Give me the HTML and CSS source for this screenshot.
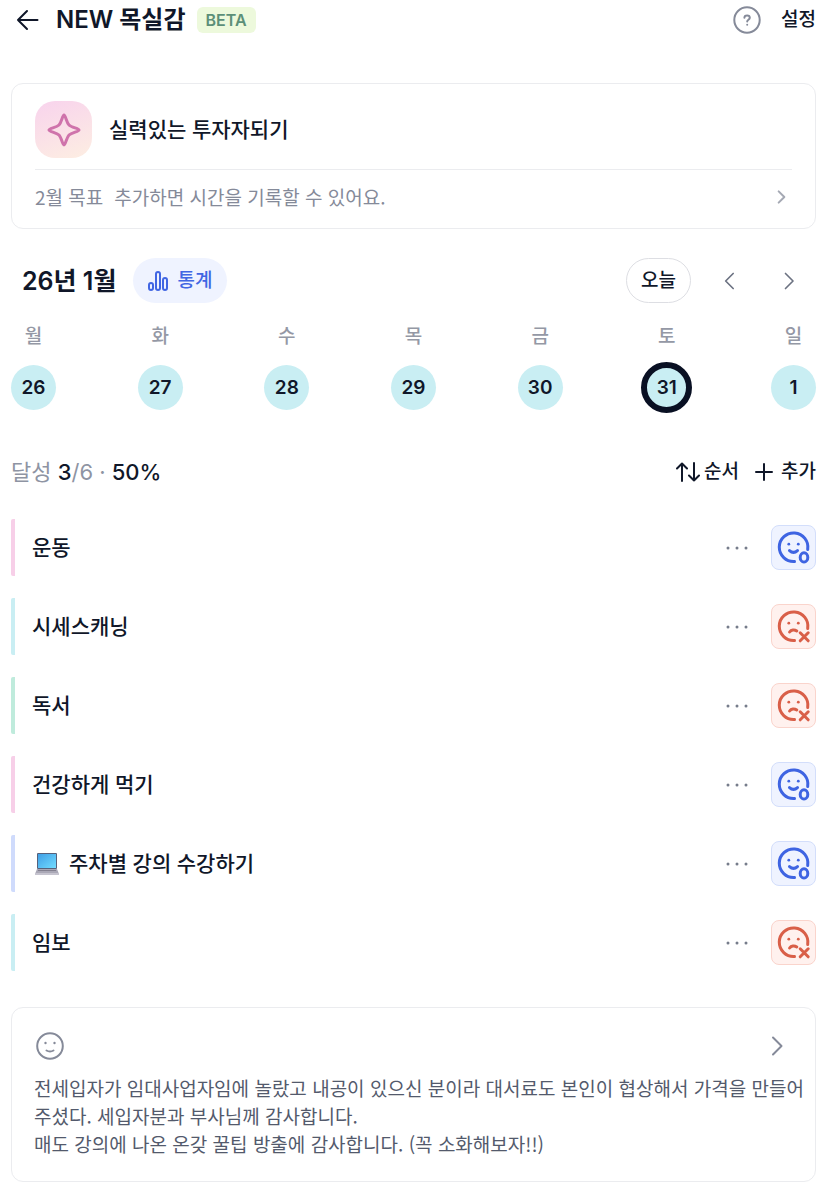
FILE: index.html
```html
<!DOCTYPE html>
<html lang="ko">
<head>
    <meta charset="UTF-8">
    <meta name="viewport" content="width=device-width, initial-scale=1.0">
    <title>NEW 목실감</title>
    <link rel="stylesheet" href="styles.css">
</head>
<body>
    <!-- Shared icons -->
    <svg class="icon-defs" aria-hidden="true">
        <symbol id="icon-right" viewBox="0 0 24 24">
            <path d="M7 3.500l8.500 8.500-8.500 8.500"/>
        </symbol>
        <symbol id="icon-more" viewBox="0 0 24 24">
            <circle cx="3" cy="12" r="1.5"/>
            <circle cx="12" cy="12" r="1.5"/>
            <circle cx="21" cy="12" r="1.5"/>
        </symbol>
        <symbol id="icon-done" viewBox="1 1 43 43">
            <path d="M36.7 24.5A14.3 14.3 0 1 0 23.5 36.5"/>
            <path d="M18.5 25.6q4 3.600 8 0"/>
            <ellipse cx="33" cy="32.400" rx="3.8" ry="4.6"/>
            <circle class="eye" cx="17.8" cy="19.2" r="1.4"/>
            <circle class="eye" cx="27.3" cy="19.2" r="1.4"/>
        </symbol>
        <symbol id="icon-fail" viewBox="1 1 43 43">
            <path d="M36.7 24.5A14.3 14.3 0 1 0 23.5 36.5"/>
            <path d="M18.6 28c1.6-2.400 4.800-2.700 7.200-1"/>
            <path d="M29.2 28.800l8 8M37.2 28.800l-8 8"/>
            <circle class="eye" cx="17.8" cy="19.2" r="1.4"/>
            <circle class="eye" cx="27.3" cy="19.2" r="1.4"/>
        </symbol>
    </svg>

    <header class="header">
        <button type="button" class="icon-button" aria-label="뒤로">
            <svg width="24" height="24" viewBox="0 0 24 24"><path d="M22.5 12H3M12 3l-9 9 9 9"/></svg>
        </button>
        <h1>NEW 목실감</h1>
        <span class="badge">BETA</span>
        <button type="button" class="icon-button help" aria-label="도움말">
            <svg width="28" height="28" viewBox="0 0 28 28">
                <circle cx="14" cy="14" r="12.7"/>
                <path d="M11.4 11.8c0-3.200 5.400-3.200 5.400 0 0 1.800-2.600 2-2.600 3.600"/>
                <circle class="dot" cx="14.2" cy="18.800" r="1"/>
            </svg>
        </button>
        <a href="#" class="settings">설정</a>
    </header>

    <main>
        <section class="card goal">
            <div class="goal-main">
                <span class="goal-icon">
                    <svg width="36" height="36" viewBox="0 0 36 36"><path d="M18 3C19.500 3 20.500 10.500 23 13C25.500 15.500 33 16.500 33 18C33 19.500 25.500 20.500 23 23C20.500 25.500 19.500 33 18 33C16.500 33 15.500 25.500 13 23C10.500 20.500 3 19.500 3 18C3 16.500 10.500 15.500 13 13C15.500 10.500 16.500 3 18 3Z"/></svg>
                </span>
                <h2>실력있는 투자자되기</h2>
            </div>
            <a href="#" class="goal-month">
                <span>2월 목표</span>
                <span>추가하면 시간을 기록할 수 있어요.</span>
                <svg class="chevron" width="16" height="16"><use href="#icon-right"/></svg>
            </a>
        </section>

        <section class="calendar">
            <div class="calendar-header">
                <h2>26년 1월</h2>
                <button type="button" class="stats">
                    <svg width="20" height="20" viewBox="0 0 20 20">
                        <rect x="1" y="12" width="4" height="7" rx="2"/>
                        <rect x="8" y="1" width="4" height="18" rx="2"/>
                        <rect x="15" y="7" width="4" height="12" rx="2"/>
                    </svg>
                    통계
                </button>
                <button type="button" class="today">오늘</button>
                <button type="button" class="icon-button move" aria-label="이전 주">
                    <svg width="20" height="20" viewBox="0 0 24 24"><path d="M17 3l-9 9 9 9"/></svg>
                </button>
                <button type="button" class="icon-button move" aria-label="다음 주">
                    <svg width="20" height="20" viewBox="0 0 24 24"><path d="M9 3l9 9-9 9"/></svg>
                </button>
            </div>
            <div class="week">
                <div class="day"><span>월</span><button type="button">26</button></div>
                <div class="day"><span>화</span><button type="button">27</button></div>
                <div class="day"><span>수</span><button type="button">28</button></div>
                <div class="day"><span>목</span><button type="button">29</button></div>
                <div class="day"><span>금</span><button type="button">30</button></div>
                <div class="day"><span>토</span><button type="button" class="selected">31</button></div>
                <div class="day"><span>일</span><button type="button">1</button></div>
            </div>
        </section>

        <section class="summary">
            <p>달성 <strong>3</strong>/6 · <strong>50%</strong></p>
            <div class="summary-actions">
                <button type="button" class="sort">
                    <svg width="24" height="20" viewBox="0 0 24 20"><path d="M6 19V1.500M1 6.500l5-5 5 5M18 1v17.500M13 13.500l5 5 5-5"/></svg>
                    순서
                </button>
                <button type="button" class="add">
                    <svg width="18" height="18" viewBox="0 0 18 18"><path d="M9 1v16M1 9h16"/></svg>
                    추가
                </button>
            </div>
        </section>

        <ul class="todo-list">
            <li class="todo pink">
                <span class="todo-name">운동</span>
                <button type="button" class="icon-button more" aria-label="더보기"><svg width="24" height="24"><use href="#icon-more"/></svg></button>
                <button type="button" class="status done" aria-label="완료"><svg><use href="#icon-done"/></svg></button>
            </li>
            <li class="todo cyan">
                <span class="todo-name">시세스캐닝</span>
                <button type="button" class="icon-button more" aria-label="더보기"><svg width="24" height="24"><use href="#icon-more"/></svg></button>
                <button type="button" class="status fail" aria-label="미완료"><svg><use href="#icon-fail"/></svg></button>
            </li>
            <li class="todo green">
                <span class="todo-name">독서</span>
                <button type="button" class="icon-button more" aria-label="더보기"><svg width="24" height="24"><use href="#icon-more"/></svg></button>
                <button type="button" class="status fail" aria-label="미완료"><svg><use href="#icon-fail"/></svg></button>
            </li>
            <li class="todo pink">
                <span class="todo-name">건강하게 먹기</span>
                <button type="button" class="icon-button more" aria-label="더보기"><svg width="24" height="24"><use href="#icon-more"/></svg></button>
                <button type="button" class="status done" aria-label="완료"><svg><use href="#icon-done"/></svg></button>
            </li>
            <li class="todo blue">
                <span class="todo-name">
                    <svg class="laptop" width="30" height="24" viewBox="0 0 30 24">
                        <defs>
                            <linearGradient id="screen" x1="0" y1="0" x2="1" y2="1">
                                <stop offset="0" stop-color="#3f9fe6"/>
                                <stop offset="1" stop-color="#72dcff"/>
                            </linearGradient>
                        </defs>
                        <rect x="5" y="1" width="20" height="16" rx="1" fill="#56617b"/>
                        <rect x="6" y="2" width="18" height="14" fill="url(#screen)"/>
                        <path d="M5 17h20l2 5H3z" fill="#aaa8b6"/>
                        <path d="M6 18h18v1H6z" fill="#83808f"/>
                        <path d="M3 21h24v2H3z" fill="#c6c4cf"/>
                    </svg>
                    주차별 강의 수강하기
                </span>
                <button type="button" class="icon-button more" aria-label="더보기"><svg width="24" height="24"><use href="#icon-more"/></svg></button>
                <button type="button" class="status done" aria-label="완료"><svg><use href="#icon-done"/></svg></button>
            </li>
            <li class="todo cyan">
                <span class="todo-name">임보</span>
                <button type="button" class="icon-button more" aria-label="더보기"><svg width="24" height="24"><use href="#icon-more"/></svg></button>
                <button type="button" class="status fail" aria-label="미완료"><svg><use href="#icon-fail"/></svg></button>
            </li>
        </ul>

        <section class="card memo">
            <div class="memo-header">
                <svg width="28" height="28" viewBox="0 0 28 28">
                    <circle cx="14" cy="14" r="12.8"/>
                    <path d="M10.500 18.500q3.500 2 7 0"/>
                    <circle class="dot" cx="9.500" cy="11" r="1.200"/>
                    <circle class="dot" cx="18.500" cy="11" r="1.200"/>
                </svg>
                <button type="button" class="icon-button" aria-label="감사일기 보기">
                    <svg width="24" height="24"><use href="#icon-right"/></svg>
                </button>
            </div>
            <p>전세입자가 임대사업자임에 놀랐고 내공이 있으신 분이라 대서료도 본인이 협상해서 가격을 만들어 주셨다. 세입자분과 부사님께 감사합니다.<br>매도 강의에 나온 온갖 꿀팁 방출에 감사합니다. (꼭 소화해보자!!)</p>
        </section>
    </main>
</body>
</html>
```
FILE: styles.css
```css
* {
    box-sizing: border-box;
}

body {
    font-family: Inter, "Noto Sans CJK KR", sans-serif;
    font-size: 19px;
    line-height: 28px;
    margin: 0;
    padding: 0 11px 10px;
    background-color: white;
    color: #101729;
}

h1, h2, p, ul {
    margin: 0;
    padding: 0;
}

button {
    font: inherit;
    color: inherit;
    background: none;
    border: none;
    padding: 0;
    cursor: pointer;
}

a {
    color: inherit;
    text-decoration: none;
}

svg {
    display: block;
    flex-shrink: 0;
    fill: none;
    stroke: currentColor;
    stroke-width: 2;
    stroke-linecap: round;
    stroke-linejoin: round;
}

.icon-defs {
    position: absolute;
    width: 0;
    height: 0;
}

.dot,
.eye {
    fill: currentColor;
    stroke: none;
}

.icon-button {
    display: flex;
    align-items: center;
    justify-content: center;
}

.card {
    border: 1px solid #ebecef;
    border-radius: 12px;
}

/* Header */
.header {
    display: flex;
    align-items: center;
    height: 40px;
    padding-left: 4px;
}

.header h1 {
    margin: 0 11px 0 17px;
    font-size: 24px;
    font-weight: 600;
}

.badge {
    padding: 0 9px;
    border-radius: 6px;
    background-color: #edf9dc;
    color: #5c8f78;
    font-size: 16px;
    font-weight: 600;
    line-height: 26px;
}

.help {
    margin-left: auto;
    color: #858a99;
}

.settings {
    margin-left: 20px;
    font-weight: 500;
}

/* Goal */
.goal {
    margin-top: 43px;
    padding: 17px 23px 0;
}

.goal-main {
    display: flex;
    align-items: center;
    gap: 17px;
    padding-bottom: 11px;
    border-bottom: 1px solid #ebecef;
}

.goal-icon {
    display: flex;
    align-items: center;
    justify-content: center;
    width: 57px;
    height: 57px;
    border-radius: 20px;
    background: linear-gradient(160deg, #f8d3ed, #fdeee2);
    color: #cf73ab;
}

.goal-icon svg {
    stroke-width: 3;
}

.goal h2 {
    font-size: 21px;
    font-weight: 500;
}

.goal-month {
    display: flex;
    align-items: center;
    gap: 11px;
    height: 58px;
    padding-bottom: 4px;
    color: #858a99;
    font-family: "Noto Sans CJK KR", sans-serif;
}

.chevron {
    margin-left: auto;
    margin-right: 2px;
    color: #a5a9b4;
    stroke-width: 3;
}

/* Calendar */
.calendar {
    margin-top: 29px;
}

.calendar-header {
    display: flex;
    align-items: center;
    padding-left: 11px;
}

.calendar-header h2 {
    font-size: 25px;
    font-weight: 600;
}

.stats,
.today {
    display: flex;
    align-items: center;
    height: 45px;
    padding: 0 15px;
    border-radius: 23px;
    font-weight: 500;
}

.stats {
    gap: 9px;
    margin-left: 17px;
    background-color: #eff3ff;
    color: #4166e3;
}

.today {
    margin-left: auto;
    margin-right: 10px;
    padding: 0 14px;
    border: 1px solid #dddee3;
}

.move {
    width: 56px;
    height: 45px;
    color: #6c7282;
}

.move + .move {
    margin-left: 3px;
}

.week {
    display: flex;
    justify-content: space-between;
    margin-top: 20px;
}

.day {
    display: flex;
    flex-direction: column;
    align-items: center;
    gap: 14px;
    width: 45px;
    color: #9498a5;
    font-weight: 500;
}

.day button {
    flex-shrink: 0;
    width: 45px;
    height: 45px;
    border-radius: 50%;
    background-color: #c9eef3;
    color: #101729;
    font-weight: 600;
}

.day .selected {
    width: 51px;
    height: 51px;
    margin: -3px;
    border: 6px solid #091023;
}

/* Summary */
.summary {
    display: flex;
    align-items: center;
    justify-content: space-between;
    margin-top: 48px;
    color: #8e94a3;
}

.summary p {
    font-size: 22px;
}

.summary strong {
    color: #101729;
    font-weight: 500;
}

.summary-actions {
    display: flex;
    gap: 16px;
    color: #101729;
    font-weight: 500;
}

.sort,
.add {
    display: flex;
    align-items: center;
    gap: 4px;
}

.add {
    gap: 8px;
}

/* Todo list */
.todo-list {
    display: flex;
    flex-direction: column;
    gap: 22px;
    margin-top: 33px;
    list-style: none;
}

.todo {
    display: flex;
    align-items: center;
    height: 57px;
    border-left: 4px solid;
    border-radius: 2px;
}

.pink {
    border-color: #f7cfe8;
}

.cyan {
    border-color: #c9eef3;
}

.green {
    border-color: #bfebdc;
}

.blue {
    border-color: #cfdbfc;
}

.todo-name {
    display: flex;
    align-items: center;
    gap: 7px;
    flex: 1;
    padding-left: 17px;
    font-size: 21px;
    font-weight: 500;
}

.laptop {
    stroke: none;
}

.more {
    margin-right: 22px;
    color: #767c8b;
}

.more svg {
    fill: currentColor;
    stroke: none;
}

.status {
    width: 45px;
    height: 45px;
    border: 1px solid;
    border-radius: 8px;
}

.status svg {
    width: 100%;
    height: 100%;
    stroke-width: 3;
}

.done {
    border-color: #d3defb;
    background-color: #eff3ff;
    color: #3e64e2;
}

.fail {
    border-color: #fad4cc;
    background-color: #fff1ee;
    color: #d95f48;
}

/* Memo */
.memo {
    margin-top: 36px;
    padding: 24px 8px 23px 22px;
}

.memo-header {
    display: flex;
    align-items: center;
    justify-content: space-between;
    padding: 0 17px 0 2px;
    color: #858a99;
}

.memo p {
    margin-top: 14px;
    color: #535a6c;
    font-family: "Noto Sans CJK KR", sans-serif;
}
```
